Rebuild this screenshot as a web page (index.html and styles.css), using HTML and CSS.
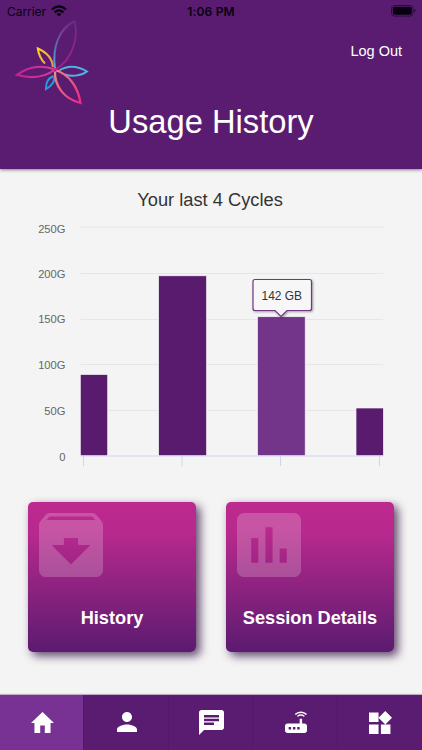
FILE: index.html
```
<!DOCTYPE html>
<html lang="en">
<head>
<meta charset="utf-8">
<meta name="viewport" content="width=device-width, initial-scale=1">
<title>Usage History</title>
<link rel="stylesheet" href="styles.css">
</head>
<body>
<div class="app">
  <header class="header">
    <div class="status">
      <div class="carrier"><span>Carrier</span>
        <svg width="16" height="12" viewBox="0 0 16 12"><g fill="none" stroke="#080010" stroke-width="2.3"><path d="M1 4.5Q8 -1.7 15 4.5"/><path d="M3.6 7.3Q8 3.5 12.4 7.3"/></g><path d="M5.5 9Q8 6.9 10.5 9L8 11.6Z" fill="#080010"/></svg>
      </div>
      <span class="clock">1:06 PM</span>
      <svg class="battery" width="26" height="12" viewBox="0 0 26 12"><rect x=".5" y=".5" width="21.6" height="10.6" rx="3" fill="none" stroke="#080010" stroke-opacity=".55"/><rect x="1.8" y="1.8" width="19" height="8" rx="1.8" fill="#080010"/><path d="M23.4 4v3.6q1.3-.5 1.3-1.8t-1.3-1.8" fill="#080010" opacity=".6"/></svg>
    </div>
    <div class="brand-row">
      <svg class="logo" width="80" height="88" viewBox="12 18 80 88" fill="none">
        <defs>
          <linearGradient id="up" x1=".7" y1="0" x2=".2" y2="1"><stop stop-color="#6c2a87"/><stop offset=".4" stop-color="#75459d"/><stop offset=".75" stop-color="#487db9"/><stop offset="1" stop-color="#52a6dc"/></linearGradient>
          <linearGradient id="upr" x1="0" y1="0" x2="0" y2="1"><stop stop-color="#6a2a88"/><stop offset="1" stop-color="#ae1f8f"/></linearGradient>
          <linearGradient id="down" x1="0" y1="0" x2="1" y2="1"><stop stop-color="#f58d76"/><stop offset=".5" stop-color="#e9557f"/><stop offset="1" stop-color="#eb2888"/></linearGradient>
          <linearGradient id="gold" x1="0" y1="0" x2="1" y2="1"><stop stop-color="#ffd51c"/><stop offset="1" stop-color="#f38d58"/></linearGradient>
          <linearGradient id="left" x1="0" y1="0" x2="1" y2="0"><stop stop-color="#c5208e"/><stop offset="1" stop-color="#d0409a"/></linearGradient>
        </defs>
        <path d="M74.500 21C79 38 72 60 56 69" stroke="url(#upr)" stroke-width="1.800"/>
        <path d="M55 69C52 47 59 29 74.500 21" stroke="url(#up)" stroke-width="2"/>
        <path d="M45 63.500C40.500 59 38.500 54 37.800 48.500C48 53 52.500 60 52.800 67" stroke="url(#gold)" stroke-width="2"/>
        <path d="M17 75C29 66 43 65 55 69.500C44 78 32 79 17 75Z" stroke="url(#left)" stroke-width="2.200"/>
        <path d="M59 70.500C68 65 78 66 87 71.500C80 76.500 71 76.500 65 74.500" stroke="#50b1e4" stroke-width="1.900"/>
        <path d="M53.500 76C47 79 46 83 46 89C51.500 86 54.500 82 54.500 77" stroke="#249cdb" stroke-width="2"/>
        <path d="M55 70C54 87 65 99 80.500 103C78 87 69 74 55 70Z" stroke="url(#down)" stroke-width="2.300"/>
        <circle cx="55" cy="70" r="1.800" fill="#bd208e"/>
      </svg>
      <a class="logout">Log Out</a>
    </div>
    <h1>Usage History</h1>
  </header>

  <main class="content">
    <svg class="chart" width="422" height="310" viewBox="0 169 422 310">
      <text class="chart-title" x="137.300" y="206" textLength="145.500" lengthAdjust="spacingAndGlyphs">Your last 4 Cycles</text>
      <g class="labels">
        <text x="65.500" y="232.500">250G</text>
        <text x="65.500" y="278">200G</text>
        <text x="65.500" y="323">150G</text>
        <text x="65.500" y="369">100G</text>
        <text x="65.500" y="414.500">50G</text>
        <text x="65.500" y="460.500">0</text>
      </g>
      <path class="gridline" d="M80.500 227H383M80.500 273.500H383M80.500 319.500H383M80.500 364.500H383M80.500 410.500H383"/>
      <path class="axis" d="M80.500 456H383M83.500 456V466M182 456V466M280.500 456V466M379.500 456V466"/>
      <g class="bars">
        <rect x="80.300" y="374.500" width="27.400" height="81.200"/>
        <rect x="158.600" y="275.800" width="48" height="179.900"/>
        <rect class="active" x="257.500" y="316.700" width="47.700" height="139"/>
        <rect x="356" y="408" width="27.400" height="47.700"/>
      </g>
      <path class="tooltip" d="M255 279.500H309.500Q311.500 279.500 311.500 281.500V308.500Q311.500 310.500 309.500 310.500H287L281 316.500L275 310.500H255Q253 310.500 253 308.500V281.500Q253 279.500 255 279.500Z"/>
      <text class="tip-text" x="261.500" y="300" textLength="40.500" lengthAdjust="spacingAndGlyphs">142 GB</text>
    </svg>

    <div class="cards">
      <a class="card">
        <svg width="64" height="64" viewBox="3 3 18 18"><path d="M20.540 5.230l-1.390-1.680C18.880 3.210 18.470 3 18 3H6c-.47 0-.88.210-1.160.550L3.460 5.230C3.170 5.570 3 6.020 3 6.500V19c0 1.100.9 2 2 2h14c1.100 0 2-.9 2-2V6.500c0-.48-.17-.93-.46-1.270zM12 17.500L6.500 12H10v-2h4v2h3.500L12 17.500zM5.120 5l.81-1h12l.94 1H5.120z"/></svg>
        <span>History</span>
      </a>
      <a class="card">
        <svg width="64" height="64" viewBox="3 3 18 18"><path d="M19 3H5c-1.100 0-2 .9-2 2v14c0 1.100.9 2 2 2h14c1.100 0 2-.9 2-2V5c0-1.100-.9-2-2-2zM9 17H7v-7h2v7zm4 0h-2V7h2v10zm4 0h-2v-4h2v4z"/></svg>
        <span>Session Details</span>
      </a>
    </div>
  </main>

  <nav class="tabs">
    <a class="tab selected"><svg width="23" height="21" viewBox="2 3 20 17" preserveAspectRatio="none"><path d="M10 20v-6h4v6h5v-8h3L12 3 2 12h3v8z"/></svg></a>
    <a class="tab"><svg width="20" height="20" viewBox="4 4 16 16"><path d="M12 12c2.210 0 4-1.790 4-4s-1.790-4-4-4-4 1.790-4 4 1.790 4 4 4zm0 2c-2.670 0-8 1.340-8 4v2h16v-2c0-2.660-5.330-4-8-4z"/></svg></a>
    <a class="tab"><svg width="25" height="25" viewBox="2 2 20 20"><path d="M20 2H4c-1.100 0-1.990.9-1.990 2L2 22l4-4h14c1.100 0 2-.9 2-2V4c0-1.100-.9-2-2-2zM6 9h12v2H6V9zm8 5H6v-2h8v2zm4-6H6V6h12v2z"/></svg></a>
    <a class="tab"><svg width="22" height="22" viewBox="3 2.600 18 18.400" preserveAspectRatio="none"><path d="M20.200 5.900l.8-.8C19.600 3.700 17.800 3 16 3s-3.600.7-5 2.100l.8.8C13 4.800 14.500 4.200 16 4.200s3 .6 4.200 1.700zm-.9.800c-.9-.9-2.100-1.400-3.300-1.400s-2.400.5-3.300 1.400l.8.800c.7-.7 1.600-1 2.500-1 .9 0 1.800.3 2.500 1l.8-.8zM19 13h-2V9h-2v4H5c-1.100 0-2 .9-2 2v4c0 1.100.9 2 2 2h14c1.100 0 2-.9 2-2v-4c0-1.100-.9-2-2-2zM8 18H6v-2h2v2zm3.500 0h-2v-2h2v2zm3.500 0h-2v-2h2v2z"/></svg></a>
    <a class="tab"><svg width="23" height="23" viewBox="3 1.690 19.310 19.310"><path d="M13 13v8h8v-8h-8zM3 21h8v-8H3v8zM3 3v8h8V3H3zm13.660-1.310L11 7.340 16.660 13l5.650-5.660-5.650-5.650z"/></svg></a>
  </nav>
</div>
</body>
</html>
```
FILE: styles.css
```
* { box-sizing: border-box; }
body {
  margin: 0;
  background: #f4f4f4;
  font-family: "Liberation Sans", Arial, sans-serif;
}
.app {
  width: 422px;
  height: 750px;
  display: flex;
  flex-direction: column;
  overflow: hidden;
}
svg { display: block; flex: none; }
.header {
  height: 169px;
  flex: none;
  background: #5a1c70;
  color: #fff;
  box-shadow: 0 1px 3px rgba(50, 20, 60, .55);
}
.status {
  height: 20px;
  padding: 2px 5px 0 7px;
  display: grid;
  grid-template-columns: 1fr auto 1fr;
  align-items: center;
  color: #080010;
  font-family: Inter, sans-serif;
  font-size: 12px;
}
.carrier { display: flex; align-items: center; gap: 5px; letter-spacing: -.05px; }
.clock { font-weight: 600; letter-spacing: .2px; margin-right: 2px; }
.battery { justify-self: end; }
.brand-row {
  height: 86px;
  padding: 0 20px 0 12px;
  display: flex;
  justify-content: space-between;
}
.logo { margin-top: -2px; }
.logout { margin-top: 23px; font-size: 14.500px; line-height: 17px; }
h1 {
  margin: -5px 0 0;
  text-align: center;
  font-size: 32.700px;
  line-height: 42px;
  font-weight: 400;
}
.content { flex: 1; }
.chart-title { font-size: 18px; fill: #333; }
.labels { font-size: 11.200px; fill: #666; text-anchor: end; }
.gridline { stroke: #e6e6e6; stroke-width: 1; }
.axis { stroke: #ccd6eb; stroke-width: 1; fill: none; }
.bars rect { fill: #591b6e; stroke: #f4f4f4; stroke-width: .7; }
.bars .active { fill: #733589; }
.tooltip {
  fill: #f7f7f7;
  stroke: #733589;
  stroke-width: 1.200;
  filter: drop-shadow(1px 1px 1px rgba(0, 0, 0, .35));
}
.tip-text { font-size: 12px; fill: #333; }
.cards {
  display: flex;
  gap: 30px;
  padding: 23px 28px 0;
}
.card {
  width: 168px;
  height: 150px;
  padding: 10.500px 0 0 10.700px;
  border-radius: 5px;
  background: linear-gradient(#bd298f 0%, #b8298d 20%, #5b1b70 100%);
  box-shadow: 4px 4px 10px rgba(50, 15, 65, .75);
  color: #fff;
  display: flex;
  flex-direction: column;
}
.card svg { fill: #fff; opacity: .2; }
.card span {
  margin: 30.500px 0 0 -10.700px;
  text-align: center;
  font-size: 18.200px;
  line-height: 22px;
  font-weight: 700;
}
.tabs {
  height: 55px;
  flex: none;
  display: grid;
  grid-template-columns: repeat(5, 1fr);
  background: #5a1c70;
  box-shadow: 0 -1px 1px rgba(60, 20, 80, .3);
}
.tab {
  display: flex;
  justify-content: center;
  align-items: center;
  padding: 0 0 1px 2px;
  border-right: 1px solid #531867;
}
.tab:last-child { border-right: 0; }
.tab svg { fill: #fff; }
.selected { background: #783294; }
```
